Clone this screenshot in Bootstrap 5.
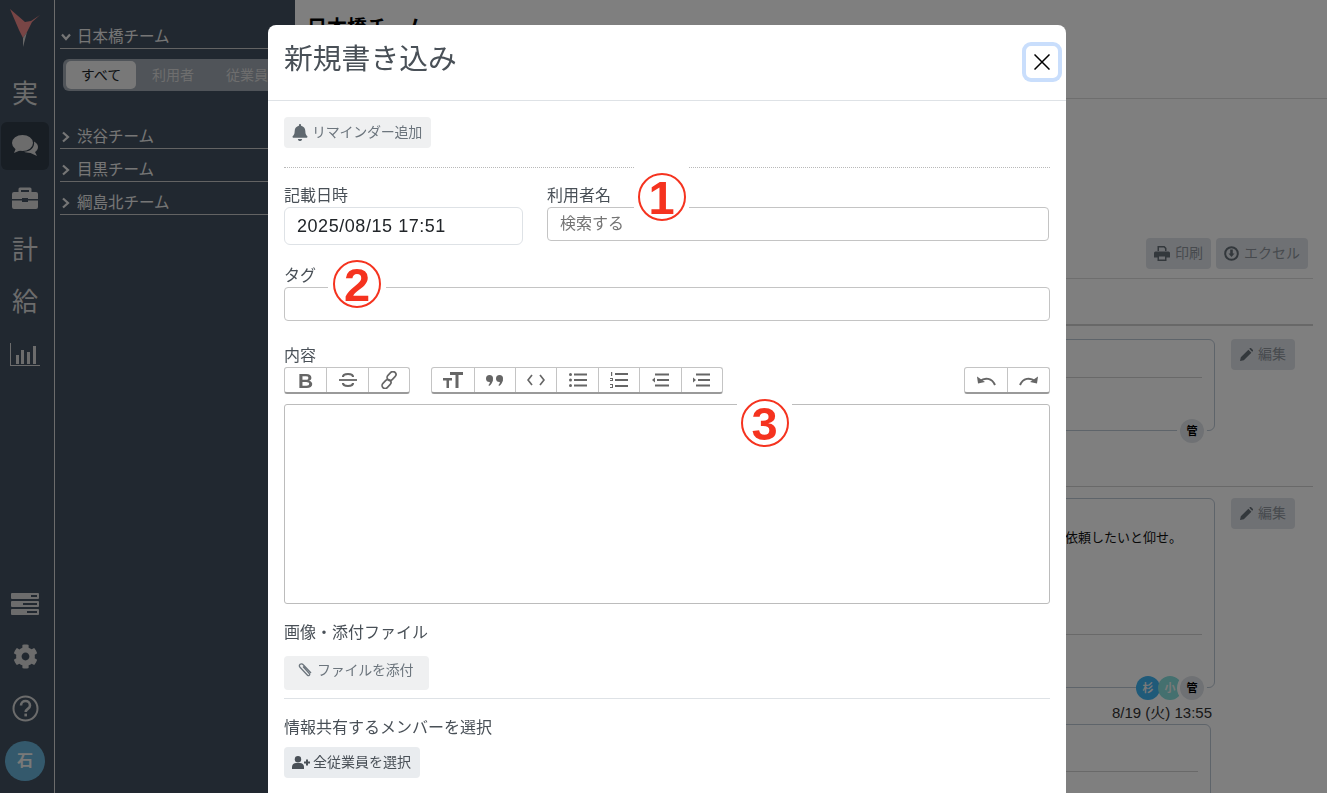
<!DOCTYPE html>
<html lang="ja">
<head>
<meta charset="utf-8">
<title>新規書き込み</title>
<link href="https://cdn.jsdelivr.net/npm/bootstrap@5.3.0/dist/css/bootstrap.min.css" rel="stylesheet">
<style>
html,body{height:100%;overflow:hidden}
body{font-family:"Liberation Sans","Noto Sans CJK JP",sans-serif;background:#fff;color:#212529}
.shell{height:793px}
.rail{width:55px;background:#435160;border-right:1px solid #d8d8d8;color:#d8d8d8;flex:none}
.rail-logo{height:68px}
.rail-logo svg{display:block}
.rail-item{width:48px;height:48px;margin:2px 0 2px 1px;border-radius:6px;font-size:26px;line-height:1;color:#d8d8d8}
.rail-item.on{background:#303c48}
.rail-item svg{display:block}
.rail-me{width:40px;height:40px;border-radius:50%;background:#68b2d8;color:#f2f2f2;font-size:16px;font-weight:700;margin:7px 0 12px 5px}
.teams{width:240px;background:#435160;color:#ececec;flex:none;padding:24px 0 0 5px;overflow:hidden}
.team-head{border-bottom:1px solid #c6c6c6;height:25px;padding-top:2px;font-size:15.5px;line-height:22px;margin-bottom:8px;width:235px;white-space:nowrap}
.team-head svg{width:12px;margin-right:5px;flex:none}
.seg{background:#a0a8b2;border-radius:6px;height:32px;margin:10px 0 33px 3px;padding:2px 3px;font-size:14px;width:240px;color:#dcdcdc;white-space:nowrap}
.seg span{display:block;line-height:28px;padding:0 16px;border-radius:5px}
.seg .act{background:#f0f0f0;color:#212529;width:70px;text-align:center;padding:0}
.stage{flex:1;min-width:0;background:#fff}
.stage-head{height:99px;border-bottom:1px solid #dcdcdc;padding:13px 12px;font-size:20px;font-weight:700;color:#000}
.stage-body{margin-right:14px;padding-left:12px}
.tools{height:180px;padding:139px 5px 0 0;border-bottom:1px solid #dcdcdc;gap:5px}
.soft{background:#dfe3e8;color:#8e959d;border:0;border-radius:4px;font-size:14px;height:31px;padding:0 9px;gap:5px;white-space:nowrap}
.soft svg{flex:none;color:#667079}
.tool-tight{padding:0 8px}
.tabbar{height:47px;border-bottom:2px solid #d0d0d0}
.post-row{gap:16px;padding-right:18px}
.post{flex:1;position:relative;border:1px solid #bcc8d4;border-radius:6px;font-size:13px;color:#111}
.post-a{height:92px;margin-top:13px}
.post-b{height:190px}
.post-c{height:90px;margin-right:102px}
.post-line{position:absolute;left:0;right:12px;border-top:1px solid #d2d2d2}
.post-a .post-line{top:37px}.post-b .post-line{top:135px}.post-c .post-line{top:46px}
.post-text{position:absolute;right:32px;top:29px;margin:0}
.faces{position:absolute;right:10px;bottom:-13px}
.face{width:24px;height:24px;border-radius:50%;font-size:11px;font-weight:700;margin-left:-2px}
.f-k{background:#dfe3e8;color:#000;box-shadow:0 0 0 3px #fff}.f-s{background:#3eb4f2;color:#f3f3f3}.f-o{background:#88e0de;color:#f3f3f3}
.sep{border-top:1px solid #d2d2d2;margin-top:55px;margin-bottom:11px}
.stamp{font-size:15px;color:#333;text-align:right;padding-right:101px;height:23px;line-height:23px;margin-top:13px}
.edit-b{align-self:flex-start}
.edit-first{margin-top:13px}
.dialog-x{max-width:798px;margin:25px 0 0 268px}
.dialog-x .modal-content{border:0;border-radius:8px;min-height:900px}
.modal.d-block{overflow:hidden}
.dlg-head{height:76px;padding:0 16px;border-bottom:1px solid #dee2e6}
.dlg-title{font-size:28.8px;line-height:1;color:#495057;font-weight:400;margin:-7px 0 0}
.dlg-close{width:40px;height:40px;background:#fff;border:0;border-radius:9px;box-shadow:0 0 0 4px #c9defc inset;margin:-2px -12px 0 0;padding:0}
.dlg-body{padding:16px}
.btn-s{background:#eff0f1;color:#6c757d;border:0;border-radius:4px;font-size:14px;height:31px;padding:0 9px 0 8px;gap:4px;white-space:nowrap}
.tight{letter-spacing:-.25px}
.dotline{border-top:1px dotted #b9b9b9;margin:19px 0 17px}
.lbl{font-size:16px;line-height:22px;color:#495057;margin:0}
.date-in{width:239px;height:38px;border:1px solid #dee2e6;border-radius:6px;color:#212529;font-size:18px;letter-spacing:.55px;padding:0 12px;line-height:36px}
.f-in{height:34px;border:1px solid #c4c4c4;border-radius:4px;padding:0 12px;font-size:16px;line-height:32px;color:#757575}
.c-date{width:239px}
.c-user{width:502px;margin-left:24px}
.trix{height:27px}
.tgroup{border:1px solid #c4c4c4;border-bottom:2px solid #9a9a9a;border-radius:3px;background:#fff}
.tb{width:41.4px;height:24px;border-left:1px solid #c4c4c4;color:#666;font-size:21px;font-weight:700;line-height:1}
.tb-w{width:42px}
.tb:first-child{border-left:0}
.tb svg{display:block}
.tg2{margin-left:21px}
.editor{height:200px;border:1px solid #bcbcbc;border-radius:3px;margin-top:10px}
.line-plain{border-top:1px solid #dee2e6;margin:8px 0 18px}
.lbl-top-t{margin-top:20px}
.lbl-top-c{margin-top:24px}
.lbl-top-f{margin-top:18px}
.btn-file{height:34px;width:145px;margin-top:12px;padding:4px 14px}
.btn-file svg{margin-top:2px;flex:none}
.btn-d{background:#e9ecef;color:#495057;margin-top:8px;gap:3px}
.mask{position:absolute;background:#fff;width:55px;display:flex;align-items:center;justify-content:center}
.ring{width:48px;height:48px;border:2px solid #f5331f;border-radius:50%;color:#f5331f;font-size:47px;font-weight:700;line-height:1;display:flex;align-items:center;justify-content:center;flex:none}
.m1{left:366px;top:135px;height:61px;padding-top:13px}
.m2{left:60px;top:234px;height:50px;width:58px}
.m3{left:469px;top:374px;height:48px}
</style>
</head>
<body>
<div class="shell d-flex">
  <aside class="rail d-flex flex-column">
    <div class="rail-logo">
      <svg width="54" height="54" viewBox="0 0 54 54"><path d="M10 9 L25 22 L31 21 L40 15 L32 22 L27 32 L23 38 L19 30 Z" fill="#f08a8a"/><path d="M23 38 L27 32 L23 47 Z" fill="#cfcfcf"/></svg>
    </div>
    <div class="rail-item d-flex align-items-center justify-content-center">実</div>
    <div class="rail-item on d-flex align-items-center justify-content-center">
      <svg width="26" height="22" viewBox="0 0 26 22" fill="currentColor"><ellipse cx="10.500" cy="8" rx="10.500" ry="8"/><path d="M4 13 L2 18 L9 15Z"/><path d="M22 6.500 C24.800 8 26 10 26 12 C26 14.500 24.500 16 23 17 L25 21 L18.500 18 C15.500 18 13.500 17.500 12 16.800 C18 16.800 23 13 22 6.500Z"/></svg>
    </div>
    <div class="rail-item d-flex align-items-center justify-content-center">
      <svg width="26" height="22" viewBox="0 0 26 22" fill="currentColor"><path d="M8 0.500h10a1.500 1.500 0 0 1 1.500 1.500v3H17V3H9v2H6.500V2A1.500 1.500 0 0 1 8 .5z"/><path d="M2 5h22a2 2 0 0 1 2 2v5H16v-1h-6v1H0V7a2 2 0 0 1 2-2z"/><path d="M0 13.500h10V15h6v-1.500h10V20a2 2 0 0 1-2 2H2a2 2 0 0 1-2-2z"/></svg>
    </div>
    <div class="rail-item d-flex align-items-center justify-content-center">計</div>
    <div class="rail-item d-flex align-items-center justify-content-center">給</div>
    <div class="rail-item d-flex align-items-center justify-content-center">
      <svg width="30" height="23" viewBox="0 0 30 23" fill="currentColor"><path d="M0 0h1v22h29v1H0z"/><rect x="6" y="12" width="3" height="9"/><rect x="11" y="7" width="3" height="14"/><rect x="17" y="9" width="3" height="12"/><rect x="23" y="3" width="3" height="18"/></svg>
    </div>
    <div class="flex-grow-1"></div>
    <div class="rail-item d-flex align-items-center justify-content-center">
      <svg width="28" height="22" viewBox="0 0 28 22"><g fill="currentColor"><rect y="0" width="28" height="6" rx="1"/><rect y="8" width="28" height="6" rx="1"/><rect y="16" width="28" height="6" rx="1"/></g><g fill="#435160"><rect x="20" y="2" width="6" height="2"/><rect x="12" y="10" width="14" height="2"/><rect x="16" y="18" width="10" height="2"/></g></svg>
    </div>
    <div class="rail-item d-flex align-items-center justify-content-center">
      <svg width="25" height="25" viewBox="0 0 512 512" fill="currentColor"><path d="M487.4 315.700l-42.600-24.600c4.300-23.200 4.300-47 0-70.200l42.600-24.600c4.900-2.800 7.100-8.600 5.500-14-11.100-35.600-30-67.800-54.700-94.600-3.800-4.100-10-5.100-14.800-2.300L380.800 110c-17.900-15.400-38.500-27.300-60.800-35.100V25.800c0-5.600-3.900-10.500-9.400-11.700-36.700-8.200-74.300-7.800-109.200 0-5.500 1.200-9.400 6.100-9.400 11.700V75c-22.200 7.900-42.800 19.800-60.800 35.100L88.700 85.500c-4.900-2.800-11-1.900-14.800 2.300-24.700 26.700-43.600 58.900-54.700 94.600-1.700 5.400.6 11.200 5.500 14L67.300 221c-4.300 23.200-4.300 47 0 70.200l-42.600 24.600c-4.900 2.800-7.100 8.600-5.500 14 11.100 35.600 30 67.800 54.700 94.600 3.800 4.100 10 5.100 14.800 2.300l42.600-24.600c17.900 15.400 38.500 27.300 60.800 35.100v49.200c0 5.600 3.900 10.500 9.400 11.700 36.700 8.200 74.300 7.800 109.200 0 5.500-1.200 9.400-6.100 9.400-11.700v-49.200c22.200-7.900 42.800-19.800 60.800-35.100l42.600 24.600c4.900 2.800 11 1.900 14.800-2.300 24.700-26.700 43.600-58.900 54.700-94.600 1.500-5.500-.7-11.300-5.600-14.100zM256 336c-44.100 0-80-35.900-80-80s35.900-80 80-80 80 35.900 80 80-35.900 80-80 80z"/></svg>
    </div>
    <div class="rail-item d-flex align-items-center justify-content-center">
      <svg width="27" height="27" viewBox="0 0 27 27" fill="none" stroke="currentColor"><circle cx="13.500" cy="13.500" r="12" stroke-width="2"/><path d="M9 10.500c0-6 9-6 9 0 0 3.500-4.300 3.200-4.300 6.500" stroke-width="2.600"/><rect x="12.400" y="18.600" width="2.600" height="2.800" fill="currentColor" stroke="none"/></svg>
    </div>
    <div class="rail-me d-flex align-items-center justify-content-center">石</div>
  </aside>

  <nav class="teams">
    <div class="team-head d-flex align-items-center"><svg height="8" viewBox="0 0 12 8" fill="none" stroke="currentColor" stroke-width="2.200"><path d="M2 1.500 6 6l4-4.500"/></svg>日本橋チーム</div>
    <div class="seg d-flex"><span class="act">すべて</span><span>利用者</span><span>従業員</span></div>
    <div class="team-head d-flex align-items-center"><svg height="12" viewBox="0 0 12 12" fill="none" stroke="currentColor" stroke-width="2.200"><path d="M3 1.500 8 6l-5 4.500"/></svg>渋谷チーム</div>
    <div class="team-head d-flex align-items-center"><svg height="12" viewBox="0 0 12 12" fill="none" stroke="currentColor" stroke-width="2.200"><path d="M3 1.500 8 6l-5 4.500"/></svg>目黒チーム</div>
    <div class="team-head d-flex align-items-center"><svg height="12" viewBox="0 0 12 12" fill="none" stroke="currentColor" stroke-width="2.200"><path d="M3 1.500 8 6l-5 4.500"/></svg>綱島北チーム</div>
  </nav>

  <main class="stage">
    <div class="stage-head">日本橋チーム</div>
    <div class="stage-body">
      <div class="tools d-flex justify-content-end align-items-start">
        <button class="soft tool-tight d-inline-flex align-items-center" type="button">
          <svg width="16" height="15" viewBox="0 0 16 15" fill="currentColor"><path d="M3.500 0h7l2 2v3h-1.500V2.700L9.900 1.500H5V5H3.500z"/><path d="M1.500 5.500h13A1.500 1.500 0 0 1 16 7v4.500h-3.500V15h-9v-3.500H0V7a1.500 1.500 0 0 1 1.500-1.500zM5 10.500V13.500h6v-3z"/></svg>印刷</button>
        <button class="soft tool-tight d-inline-flex align-items-center" type="button">
          <svg width="15" height="15" viewBox="0 0 15 15" fill="none" stroke="currentColor"><circle cx="7.500" cy="7.500" r="6.300" stroke-width="2"/><path d="M7.500 3.500v4.500" stroke-width="2.600"/><path d="M4.500 7.500h6l-3 3.500z" fill="currentColor" stroke="none"/></svg>エクセル</button>
      </div>
      <div class="tabbar"></div>
      <div class="post-row d-flex">
        <div class="post post-a">
          <div class="post-line"></div>
          <div class="faces d-flex"><span class="face f-k d-flex align-items-center justify-content-center">管</span></div>
        </div>
        <button class="soft edit-b edit-first d-inline-flex align-items-center" type="button">
          <svg width="13" height="13" viewBox="0 0 13 13" fill="currentColor"><path d="M0 13l.8-3.700L8.400 1.700l3 3-7.600 7.600zM9.300.8l.5-.5a1 1 0 0 1 1.400 0l1.500 1.500a1 1 0 0 1 0 1.400l-.5.5z"/></svg>編集</button>
      </div>
      <div class="sep"></div>
      <div class="post-row d-flex">
        <div class="post post-b">
          <p class="post-text">利用者様のご家族より、訪問時間の変更を依頼したいと仰せ。</p>
          <div class="post-line"></div>
          <div class="faces d-flex"><span class="face f-s d-flex align-items-center justify-content-center">杉</span><span class="face f-o d-flex align-items-center justify-content-center">小</span><span class="face f-k d-flex align-items-center justify-content-center">管</span></div>
        </div>
        <button class="soft edit-b d-inline-flex align-items-center" type="button">
          <svg width="13" height="13" viewBox="0 0 13 13" fill="currentColor"><path d="M0 13l.8-3.700L8.400 1.700l3 3-7.600 7.600zM9.300.8l.5-.5a1 1 0 0 1 1.400 0l1.500 1.500a1 1 0 0 1 0 1.400l-.5.5z"/></svg>編集</button>
      </div>
      <div class="stamp">8/19 (火) 13:55</div>
      <div class="post post-c"><div class="post-line"></div></div>
    </div>
  </main>
</div>

<div class="modal-backdrop show"></div>
<div class="modal d-block" tabindex="-1">
  <div class="modal-dialog dialog-x">
    <div class="modal-content">
      <div class="dlg-head d-flex align-items-center justify-content-between">
        <h5 class="dlg-title">新規書き込み</h5>
        <button class="dlg-close d-flex align-items-center justify-content-center" type="button" aria-label="Close">
          <svg width="16" height="16" viewBox="0 0 16 16" fill="none" stroke="#000" stroke-width="1.500"><path d="M.5.5l15 15M15.500.5l-15 15"/></svg>
        </button>
      </div>
      <div class="dlg-body">
        <button class="btn-s tight d-inline-flex align-items-center" type="button">
          <svg width="16" height="17" viewBox="0 0 448 512" fill="#5f686f"><path d="M224 512c35.320 0 63.970-28.650 63.970-64H160.030c0 35.350 28.650 64 63.970 64zm215.390-149.710c-19.320-20.760-55.470-51.990-55.470-154.290 0-77.700-54.480-139.900-127.940-155.160V32c0-17.670-14.320-32-31.980-32s-31.980 14.330-31.980 32v20.840C118.560 68.100 64.080 130.300 64.080 208c0 102.300-36.150 133.530-55.470 154.290-6 6.450-8.660 14.160-8.610 21.710.11 16.400 12.980 32 32.100 32h383.800c19.120 0 32-15.600 32.100-32 .05-7.550-2.610-15.270-8.610-21.710z"/></svg>リマインダー追加</button>
        <div class="dotline"></div>
        <div class="d-flex">
          <div class="c-date"><p class="lbl">記載日時</p><div class="date-in">2025/08/15 17:51</div></div>
          <div class="c-user"><p class="lbl">利用者名</p><div class="f-in">検索する</div></div>
        </div>
        <p class="lbl lbl-top-t">タグ</p>
        <div class="f-in"></div>
        <p class="lbl lbl-top-c">内容</p>
        <div class="trix d-flex">
          <div class="tgroup d-flex">
            <div class="tb d-flex align-items-center justify-content-center">B</div>
            <div class="tb d-flex align-items-center justify-content-center"><svg width="18" height="16" viewBox="0 0 18 16" fill="none" stroke="#666" stroke-width="2.200"><path d="M0 8h18" stroke-width="1.800"/><path d="M14 5c0-4-10-4-10 0M4 11c0 4 10 4 10 0"/></svg></div>
            <div class="tb d-flex align-items-center justify-content-center"><svg width="18" height="18" viewBox="0 0 18 18" fill="none" stroke="#666" stroke-width="1.700"><rect x="8.500" y="0" width="6" height="10" rx="3" transform="rotate(45 11.500 5)"/><rect x="3.500" y="8" width="6" height="10" rx="3" transform="rotate(45 6.500 13)"/></svg></div>
          </div>
          <div class="tgroup tg2 d-flex">
            <div class="tb d-flex align-items-center justify-content-center"><svg width="20" height="16" viewBox="0 0 20 16" fill="#666"><path d="M7 0h13v3h-4.500v13h-3V3H7zM0 6h9v2.500H6V16H3.500V8.500H0z"/></svg></div>
            <div class="tb d-flex align-items-center justify-content-center"><svg width="17" height="11" viewBox="0 0 17 11" fill="#666"><circle cx="3.500" cy="3.500" r="3.500"/><circle cx="13.500" cy="3.500" r="3.500"/><path d="M7 4c0 3-2 6-4 7l-.5-1c1-1 1.500-2.500 1.500-4zM17 4c0 3-2 6-4 7l-.5-1c1-1 1.500-2.500 1.500-4z"/></svg></div>
            <div class="tb d-flex align-items-center justify-content-center"><svg width="18" height="12" viewBox="0 0 18 12" fill="none" stroke="#666" stroke-width="1.700"><path d="M5 1 1 6l4 5M13 1l4 5-4 5"/></svg></div>
            <div class="tb d-flex align-items-center justify-content-center"><svg width="18" height="14" viewBox="0 0 18 14" fill="#666"><circle cx="1.500" cy="1.500" r="1.500"/><circle cx="1.500" cy="7" r="1.500"/><circle cx="1.500" cy="12.500" r="1.500"/><rect x="5" y=".5" width="13" height="2"/><rect x="5" y="6" width="13" height="2"/><rect x="5" y="11.500" width="13" height="2"/></svg></div>
            <div class="tb d-flex align-items-center justify-content-center"><svg width="18" height="16" viewBox="0 0 18 16" fill="#666"><rect x="1" y="0" width="1.200" height="4"/><rect x="0" y="6" width="3" height="1"/><rect x="2" y="7" width="1" height="1"/><rect x="0" y="8" width="3" height="1"/><rect x="0" y="12" width="3" height="1"/><rect x="0" y="15" width="3" height="1"/><rect x="2" y="13" width="1" height="2"/><rect x="5" y="1" width="13" height="2"/><rect x="5" y="7" width="13" height="2"/><rect x="5" y="13" width="13" height="2"/></svg></div>
            <div class="tb d-flex align-items-center justify-content-center"><svg width="17" height="14" viewBox="0 0 17 14" fill="#666"><rect x="3" y=".5" width="14" height="2"/><rect x="5" y="6" width="12" height="2"/><rect x="3" y="11.500" width="14" height="2"/><path d="M3 4.500 0 7l3 2.500z"/></svg></div>
            <div class="tb d-flex align-items-center justify-content-center"><svg width="17" height="14" viewBox="0 0 17 14" fill="#666"><rect x="3" y=".5" width="14" height="2"/><rect x="5" y="6" width="12" height="2"/><rect x="3" y="11.500" width="14" height="2"/><path d="M0 4.500 3 7 0 9.500z"/></svg></div>
          </div>
          <div class="flex-grow-1"></div>
          <div class="tgroup d-flex">
            <div class="tb tb-w d-flex align-items-center justify-content-center"><svg width="19" height="12" viewBox="0 0 19 12" fill="none" stroke="#666" stroke-width="2"><path d="M18 11C15 4 8 3 3 7"/><path d="M0 2.500l1 7 7-1.500z" fill="#666" stroke="none"/></svg></div>
            <div class="tb tb-w d-flex align-items-center justify-content-center"><svg width="19" height="12" viewBox="0 0 19 12" fill="none" stroke="#666" stroke-width="2"><path d="M1 11C4 4 11 3 16 7"/><path d="M19 2.500l-1 7-7-1.500z" fill="#666" stroke="none"/></svg></div>
          </div>
        </div>
        <div class="editor"></div>
        <p class="lbl lbl-top-f">画像・添付ファイル</p>
        <button class="btn-s btn-file tight d-flex align-items-start" type="button">
          <svg width="15" height="15" viewBox="0 0 15 15" fill="none" stroke="#6c757d" stroke-width="1.300"><path d="M13 11 5 2.500a2 2 0 0 0-3 2.700l7.500 8a1.200 1.200 0 0 0 1.800-1.700L5 4.500"/></svg>ファイルを添付</button>
        <div class="line-plain"></div>
        <p class="lbl">情報共有するメンバーを選択</p>
        <button class="btn-s btn-d d-inline-flex align-items-center" type="button">
          <svg width="18" height="13" viewBox="0 0 18 13" fill="#495057"><circle cx="6" cy="3.200" r="3.200"/><path d="M0 13v-2c0-2.500 2-4 4-4h4c2 0 4 1.500 4 4v2z"/><path d="M14 3.500h2v2h2v2h-2v2h-2v-2h-2v-2h2z"/></svg>全従業員を選択</button>
      </div>
      <div class="mask m1"><div class="ring">1</div></div>
      <div class="mask m2"><div class="ring">2</div></div>
      <div class="mask m3"><div class="ring">3</div></div>
    </div>
  </div>
</div>
<script src="https://cdn.jsdelivr.net/npm/bootstrap@5.3.0/dist/js/bootstrap.bundle.min.js"></script>
</body>
</html>
